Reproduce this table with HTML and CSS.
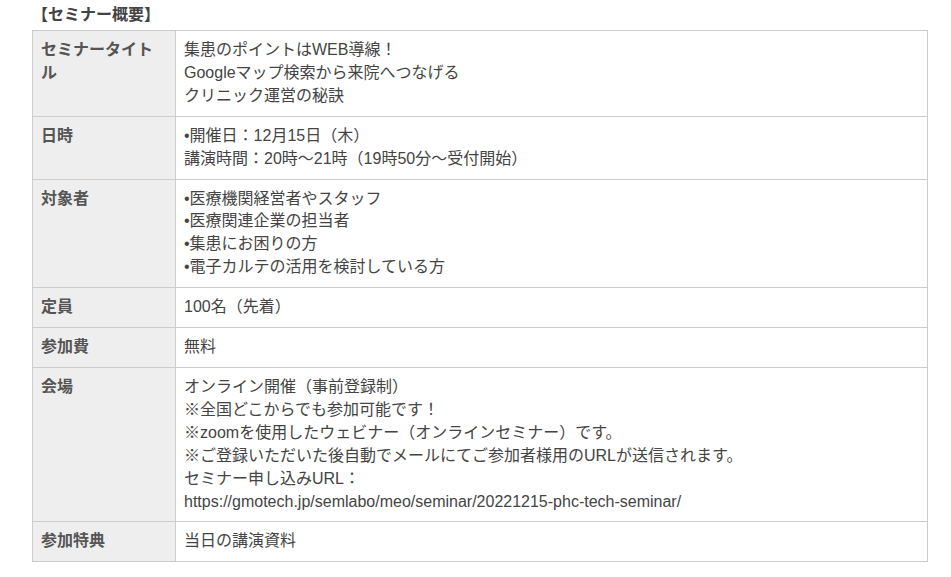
FILE: index.html
```html
<!DOCTYPE html>
<html lang="ja">
<head>
    <meta charset="UTF-8">
    <meta name="viewport" content="width=device-width, initial-scale=1.0">
    <title>セミナー概要</title>
    <link rel="stylesheet" href="styles.css">
</head>
<body>

    <div class="seminar">
        <p class="seminar-title">【セミナー概要】</p>
        <table class="outline">
            <tr>
                <th>セミナータイトル</th>
                <td>集患のポイントはWEB導線！<br>Googleマップ検索から来院へつなげる<br>クリニック運営の秘訣</td>
            </tr>
            <tr>
                <th>日時</th>
                <td>•開催日：12月15日（木）<br>講演時間：20時～21時（19時50分～受付開始）</td>
            </tr>
            <tr>
                <th>対象者</th>
                <td>•医療機関経営者やスタッフ<br>•医療関連企業の担当者<br>•集患にお困りの方<br>•電子カルテの活用を検討している方</td>
            </tr>
            <tr>
                <th>定員</th>
                <td>100名（先着）</td>
            </tr>
            <tr>
                <th>参加費</th>
                <td>無料</td>
            </tr>
            <tr>
                <th>会場</th>
                <td>オンライン開催（事前登録制）<br>※全国どこからでも参加可能です！<br>※zoomを使用したウェビナー（オンラインセミナー）です。<br>※ご登録いただいた後自動でメールにてご参加者様用のURLが送信されます。<br>セミナー申し込みURL：<br>https://gmotech.jp/semlabo/meo/seminar/20221215-phc-tech-seminar/</td>
            </tr>
            <tr>
                <th>参加特典</th>
                <td>当日の講演資料</td>
            </tr>
        </table>
    </div>

</body>
</html>
```

FILE: styles.css
```css
body {
    margin: 0;
    background: #fff;
    color: #444;
    font-family: "Liberation Sans", "Noto Sans CJK JP", sans-serif;
}
.seminar {
    width: 896px;
    margin-left: 32px;
}
.seminar-title {
    margin: 0;
    font-size: 16px;
    font-weight: bold;
    line-height: 30px;
}
.outline {
    width: 100%;
    border-collapse: collapse;
    font-size: 16px;
    line-height: 22.9px;
}
.outline th,
.outline td {
    border: 1px solid #ccc;
    padding: 8px;
    text-align: left;
    vertical-align: top;
}
.outline th {
    width: 126px;
    background: #eee;
    color: #555;
    font-weight: bold;
}
```
